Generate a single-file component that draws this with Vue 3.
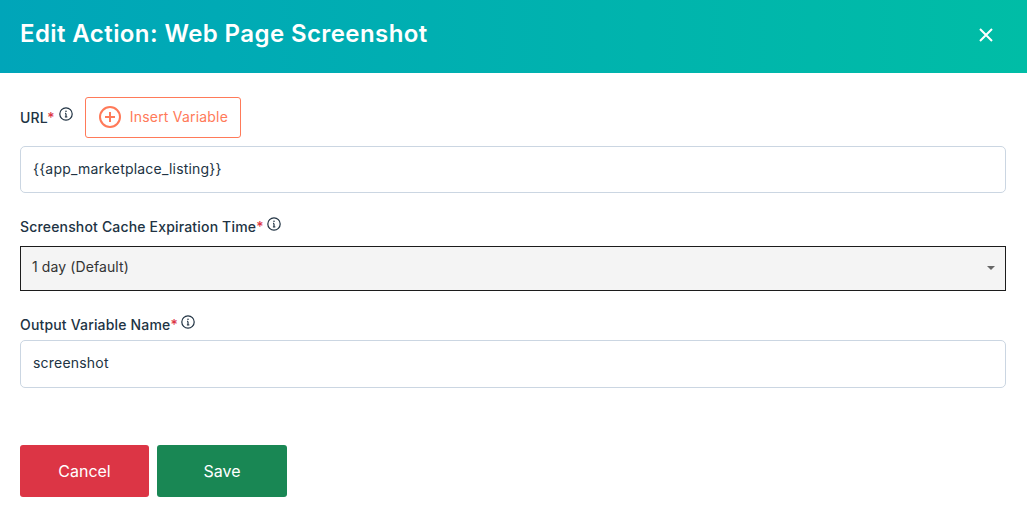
<script setup>
const infoPaths = ['M7 6.4v3.4', 'M5.9 9.9h2.4', 'M6.1 6.4H7']
</script>

<template>
  <div class="modal">
    <header class="head">
      <h1 class="title">Edit Action: Web Page Screenshot</h1>
      <button class="close" type="button" aria-label="Close">
        <svg width="16" height="16" viewBox="0 0 16 16"><path d="M2 2l12 12M14 2L2 14" /></svg>
      </button>
    </header>
    <main class="body">
      <div class="url-row">
        <label class="label">URL<span class="req">*</span></label>
        <svg class="info url-info" width="14" height="14" viewBox="0 0 14 14">
          <circle cx="7" cy="7" r="6.2" />
          <path v-for="d in infoPaths" :key="d" :d="d" />
          <circle class="dot" cx="7" cy="4.2" r="0.8" />
        </svg>
        <button class="insert" type="button">
          <svg width="24" height="24" viewBox="0 0 24 24"><circle cx="12" cy="12" r="10" /><path d="M12 7v10M7 12h10" /></svg>
          <span>Insert Variable</span>
        </button>
      </div>
      <input class="field" value="{{app_marketplace_listing}}" />

      <div class="label-row second">
        <label class="label">Screenshot Cache Expiration Time<span class="req">*</span></label>
        <svg class="info" width="14" height="14" viewBox="0 0 14 14">
          <circle cx="7" cy="7" r="6.2" />
          <path v-for="d in infoPaths" :key="d" :d="d" />
          <circle class="dot" cx="7" cy="4.2" r="0.8" />
        </svg>
      </div>
      <div class="select">
        <span>1 day (Default)</span>
        <i class="caret"></i>
      </div>

      <div class="label-row third">
        <label class="label">Output Variable Name<span class="req">*</span></label>
        <svg class="info" width="14" height="14" viewBox="0 0 14 14">
          <circle cx="7" cy="7" r="6.2" />
          <path v-for="d in infoPaths" :key="d" :d="d" />
          <circle class="dot" cx="7" cy="4.2" r="0.8" />
        </svg>
      </div>
      <input class="field tall" value="screenshot" />

      <div class="actions">
        <button class="btn cancel" type="button">Cancel</button>
        <button class="btn save" type="button">Save</button>
      </div>
    </main>
  </div>
</template>

<style scoped>
.modal {
  width: 1027px;
  height: 514px;
  background: #fff;
  font-family: Inter, "Liberation Sans", sans-serif;
  color: #213343;
  overflow: hidden;
}
.head {
  height: 73px;
  box-sizing: border-box;
  padding: 0 33px 6px 20px;
  display: flex;
  align-items: center;
  justify-content: space-between;
  background: linear-gradient(90deg, #00a5b9, #00bda6);
}
.title {
  margin: 0;
  font-size: 24px;
  line-height: 32px;
  font-weight: 600;
  letter-spacing: 0.41px;
  color: #fff;
}
.close {
  width: 17px;
  height: 17px;
  margin-top: 2px;
  padding: 0;
  border: 0;
  background: none;
  display: flex;
  align-items: center;
  justify-content: center;
}
.close path {
  stroke: #fff;
  stroke-width: 2;
  fill: none;
}
.body {
  padding: 24px 21px 0 20px;
  display: flex;
  flex-direction: column;
}
.url-row {
  display: flex;
  align-items: center;
  height: 41px;
}
.label-row {
  display: flex;
  align-items: center;
  height: 20px;
}
.label {
  font-size: 14px;
  line-height: 20px;
  font-weight: 500;
  letter-spacing: 0.17px;
  color: #213343;
}
.req {
  color: #dc3545;
}
.info {
  margin: -7px 0 0 3px;
  flex: none;
}
.info circle {
  fill: none;
  stroke: #213343;
  stroke-width: 1.2;
}
.info path {
  fill: none;
  stroke: #213343;
  stroke-width: 1.2;
}
.info .dot {
  fill: #213343;
  stroke: none;
}
.url-info {
  margin-left: 4px;
  margin-right: 12px;
}
.insert {
  height: 41px;
  width: 156px;
  box-sizing: border-box;
  border: 1px solid #ff7a59;
  border-radius: 3px;
  background: #fff;
  color: #ff7a59;
  font-family: inherit;
  font-size: 14px;
  letter-spacing: 0.2px;
  padding: 0 0 2px 12px;
  display: flex;
  align-items: center;
  gap: 8px;
}
.insert circle,
.insert path {
  fill: none;
  stroke: #ff7a59;
  stroke-width: 2;
}
.field {
  margin-top: 8px;
  height: 47px;
  box-sizing: border-box;
  border: 1px solid #cbd6e2;
  border-radius: 5px;
  padding: 0 12px 2px;
  font-family: inherit;
  font-size: 14px;
  letter-spacing: 0.2px;
  color: #213343;
  background: #fff;
  outline: none;
}
.tall {
  height: 48px;
  margin-top: 5px;
  padding-bottom: 3px;
}
.second {
  margin-top: 24px;
}
.third {
  margin-top: 24px;
}
.select {
  margin-top: 9px;
  height: 45px;
  box-sizing: border-box;
  border: 1px solid #1c1c1c;
  background: #f4f4f4;
  padding: 0 10px 4px 11px;
  display: flex;
  align-items: center;
  justify-content: space-between;
  font-size: 14px;
  letter-spacing: 0.1px;
  color: #333;
}
.caret {
  width: 0;
  height: 0;
  border-left: 4px solid transparent;
  border-right: 4px solid transparent;
  border-top: 4px solid #666;
  margin-top: 3px;
}
.actions {
  margin-top: 57px;
  display: flex;
  gap: 8px;
}
.btn {
  height: 52px;
  border: 0;
  border-radius: 3px;
  color: #fff;
  font-family: inherit;
  font-size: 16px;
  font-weight: 400;
}
.cancel {
  width: 129px;
  background: #dc3545;
}
.save {
  width: 130px;
  background: #198754;
}
</style>
